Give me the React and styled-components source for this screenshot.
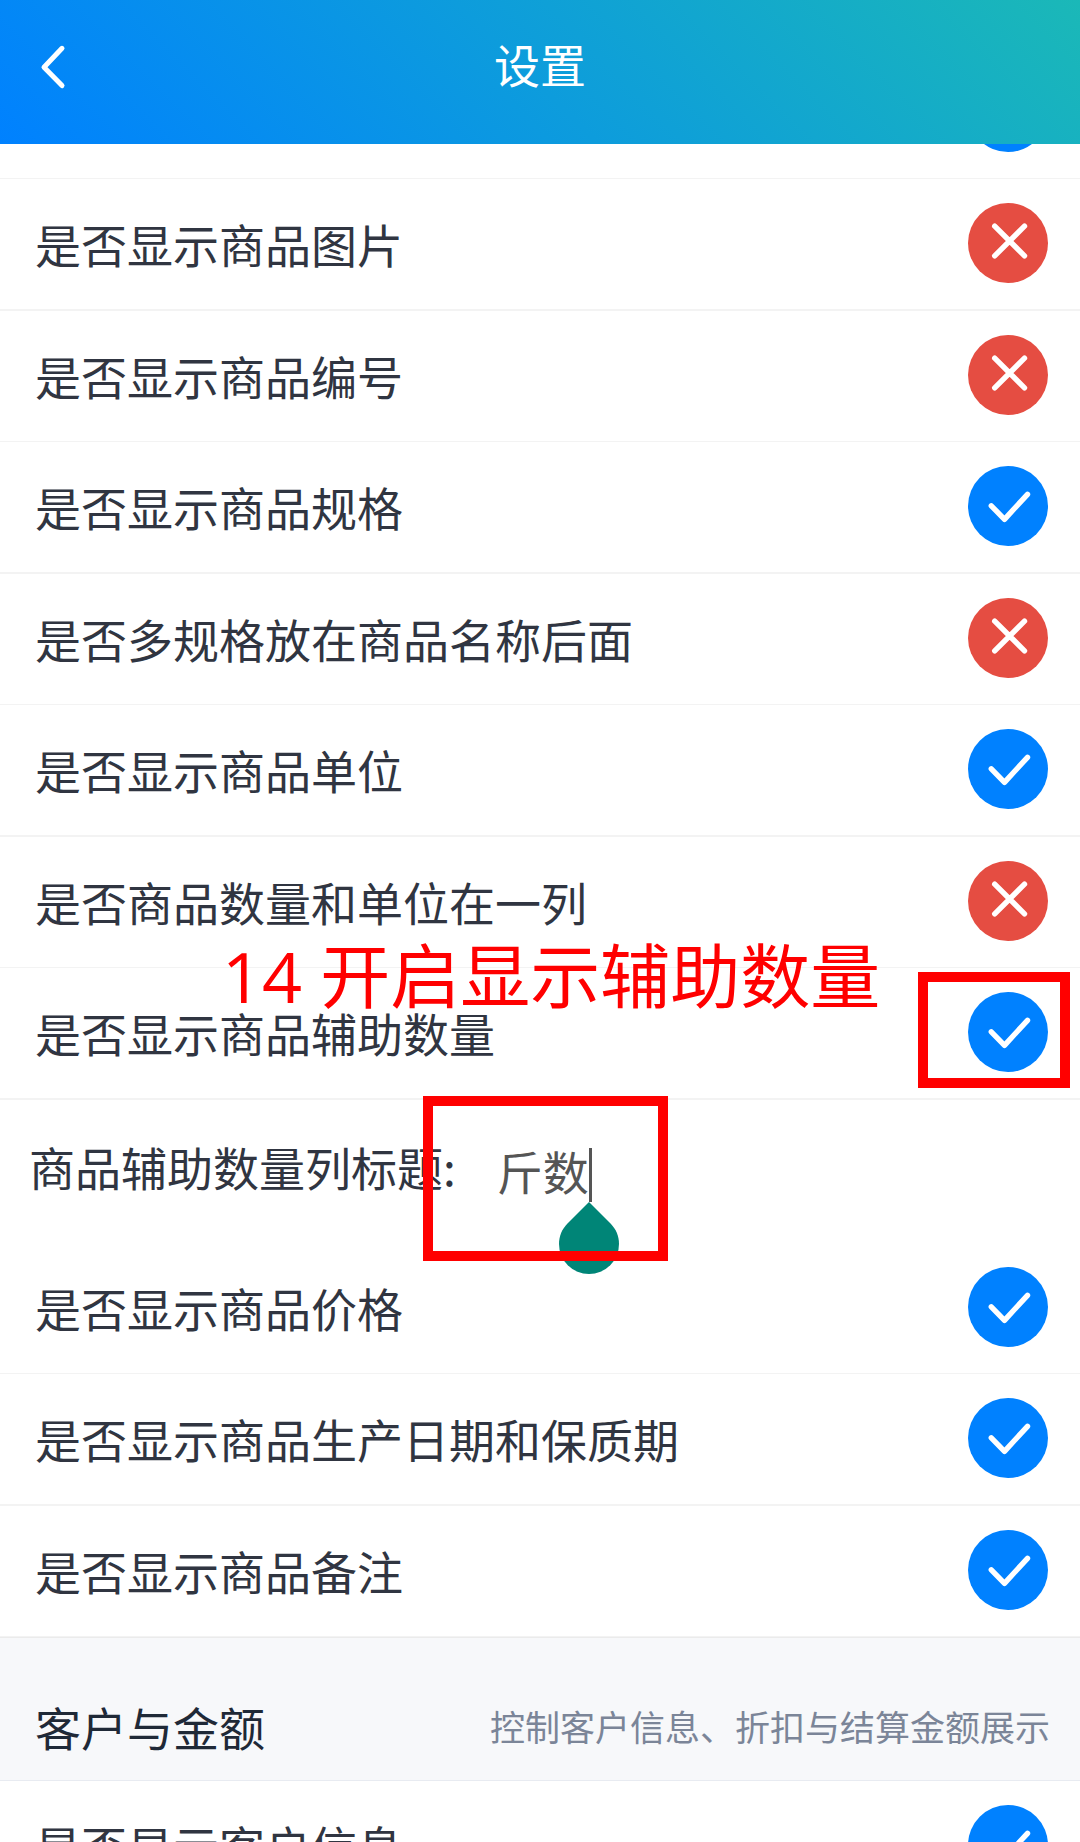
import React, { useState } from "react";
import styled, { createGlobalStyle } from "styled-components";

const COLORS = {
    BLUE: "#0081ff",
    RED: "#e54d42",
    MARK: "#ff0000",
    TEXT: "#303541",
    TITLE: "#1f2937",
    MUTED: "#7b8598",
    INPUT: "#555555",
    LINE: "#f3f3f3",
    HANDLE: "#008577",
};

const FONT_SIZE = {
    S: "35px",
    M: "46px",
    L: "70px",
};

const PRODUCT_OPTIONS = [
    { id: "name", hint: "商品名称", checked: true },
    { id: "image", title: "是否显示商品图片", checked: false },
    { id: "code", title: "是否显示商品编号", checked: false },
    { id: "spec", title: "是否显示商品规格", checked: true },
    { id: "specAfterName", title: "是否多规格放在商品名称后面", checked: false },
    { id: "unit", title: "是否显示商品单位", checked: true },
    { id: "unitInline", title: "是否商品数量和单位在一列", checked: false },
    {
        id: "auxCount",
        title: "是否显示商品辅助数量",
        checked: true,
        note: "14 开启显示辅助数量",
    },
];

const DETAIL_OPTIONS = [
    { id: "price", title: "是否显示商品价格", checked: true },
    { id: "dates", title: "是否显示商品生产日期和保质期", checked: true },
    { id: "remark", title: "是否显示商品备注", checked: true },
];

const CUSTOMER_OPTIONS = [
    { id: "customer", title: "是否显示客户信息", checked: true },
];

const GlobalStyle = createGlobalStyle`
    * {
        box-sizing: border-box;
    }

    body {
        background: #ffffff;
        color: ${COLORS.TEXT};
        font-family: "Noto Sans CJK SC", sans-serif;
        font-size: ${FONT_SIZE.M};
        margin: 0;
    }
`;

const Page = styled("div")`
    display: flex;
    flex-direction: column;
    height: 100vh;
    overflow: hidden;
`;

const Header = styled("header")`
    align-items: center;
    background: linear-gradient(45deg, ${COLORS.BLUE}, #1cbbb4 105%);
    color: #ffffff;
    display: grid;
    flex: none;
    grid-template-columns: 1fr auto 1fr;
    height: 144px;
    padding: 0 32px 10px;
`;

const BackButton = styled("button")`
    background: transparent;
    border: 0;
    color: inherit;
    cursor: pointer;
    height: 60px;
    justify-self: start;
    padding: 0;
    width: 40px;

    & svg {
        display: block;
    }
`;

const PageTitle = styled("h1")`
    font-size: ${FONT_SIZE.M};
    font-weight: 400;
    line-height: 60px;
    margin: 0;
    padding-bottom: 8px;
`;

const Scroller = styled("main")`
    flex: 1;
    min-height: 0;
    overflow-y: auto;
    scrollbar-width: none;
`;

/* the list is scrolled past its first entries */
const Settings = styled("div")`
    margin-top: -96px;
`;

const Group = styled("div")`
    display: flex;
    flex-direction: column;
`;

const Row = styled("div")`
    align-items: center;
    border-bottom: 1px solid ${COLORS.LINE};
    box-sizing: content-box;
    display: flex;
    height: 128px;
    justify-content: space-between;
    padding: 0 32px 2px 35px;
    position: relative;

    &:nth-child(even) {
        border-bottom-width: 2px;
    }
`;

const RowLabel = styled("label")`
    line-height: 60px;
`;

const Toggle = styled("span")`
    display: grid;
    margin-left: auto;

    & > * {
        grid-area: 1 / 1;
    }

    & svg {
        pointer-events: none;
    }
`;

const ToggleInput = styled("input")`
    appearance: none;
    background: ${COLORS.RED};
    border-radius: 50%;
    cursor: pointer;
    height: 80px;
    margin: 0;
    width: 80px;

    &:checked {
        background: ${COLORS.BLUE};
    }
`;

const Field = styled("div")`
    align-items: flex-start;
    display: flex;
    height: 143px;
    padding: 36px 32px 0 29px;
    position: relative;
`;

const FieldLabel = styled("label")`
    line-height: 60px;
    white-space: nowrap;
`;

const FieldBody = styled("div")`
    flex: 1;
    margin-left: 41px;
    padding-top: 4px;
    position: relative;
`;

const TextInput = styled("input")`
    background: transparent;
    border: 0;
    color: ${COLORS.INPUT};
    display: block;
    font-family: inherit;
    font-size: ${FONT_SIZE.M};
    height: 60px;
    line-height: 60px;
    outline: none;
    padding: 0;
    width: 100%;
`;

const Caret = styled("span")`
    background: ${COLORS.INPUT};
    height: 54px;
    left: 92px;
    position: absolute;
    top: 12px;
    width: 3px;
`;

const CaretHandle = styled("svg")`
    left: 62px;
    position: absolute;
    top: 66px;
`;

const Section = styled("div")`
    align-items: center;
    background: #f7f8fa;
    border-bottom: 1px solid #e8ebf1;
    border-top: 1px solid #ebebeb;
    display: flex;
    height: 144px;
    justify-content: space-between;
    padding: 34px 30px 0 35px;
`;

const SectionTitle = styled("h2")`
    color: ${COLORS.TITLE};
    font-size: ${FONT_SIZE.M};
    font-weight: 400;
    line-height: 60px;
    margin: 0;
`;

const SectionHint = styled("span")`
    color: ${COLORS.MUTED};
    font-size: ${FONT_SIZE.S};
    line-height: 60px;
`;

const MarkBox = styled("div")`
    border: 10px solid ${COLORS.MARK};
    pointer-events: none;
    position: absolute;
    z-index: 1;
`;

const ToggleMark = styled(MarkBox)`
    height: 116px;
    right: 10px;
    top: 4px;
    width: 152px;
`;

const FieldMark = styled(MarkBox)`
    height: 165px;
    left: 423px;
    top: -4px;
    width: 245px;
`;

const MarkText = styled("div")`
    color: ${COLORS.MARK};
    font-family: "Open Sans", "Noto Sans CJK SC", sans-serif;
    font-size: ${FONT_SIZE.L};
    left: 222px;
    line-height: 80px;
    pointer-events: none;
    position: absolute;
    top: -32px;
    white-space: nowrap;
    z-index: 1;
`;

const OptionRow = ({ option }) => {
    const [checked, setChecked] = useState(option.checked);

    return (
        <Row>
            {option.title && (
                <RowLabel htmlFor={option.id}>{option.title}</RowLabel>
            )}
            <Toggle>
                <ToggleInput
                    aria-label={option.hint}
                    checked={checked}
                    id={option.id}
                    onChange={(e) => setChecked(e.target.checked)}
                    type="checkbox"
                />
                <svg
                    width="80"
                    height="80"
                    viewBox="0 0 80 80"
                    fill="none"
                    stroke="#ffffff"
                    strokeWidth="5.4"
                    strokeLinecap="round"
                    strokeLinejoin="round"
                >
                    {checked ? (
                        <path d="M23.3 39.8 L36.5 53.3 L59.5 28.3" />
                    ) : (
                        <path d="M26.7 23.2 L56.5 52.8 M56.5 23.2 L26.7 52.8" />
                    )}
                </svg>
            </Toggle>
            {option.note && (
                <>
                    <MarkText>{option.note}</MarkText>
                    <ToggleMark />
                </>
            )}
        </Row>
    );
};

const App = () => {
    const [columnTitle, setColumnTitle] = useState("斤数");

    return (
        <Page>
            <GlobalStyle />
            <Header>
                <BackButton aria-label="返回">
                    <svg
                        width="40"
                        height="60"
                        viewBox="0 0 40 60"
                        fill="none"
                        stroke="currentColor"
                        strokeWidth="5"
                        strokeLinecap="round"
                        strokeLinejoin="round"
                    >
                        <path d="M30 11.3 L12 30.3 L30 48.6" />
                    </svg>
                </BackButton>
                <PageTitle>设置</PageTitle>
            </Header>
            <Scroller>
                <Settings>
                    <Group>
                        {PRODUCT_OPTIONS.map((o) => (
                            <OptionRow key={o.id} option={o} />
                        ))}
                    </Group>
                    <Field>
                        <FieldLabel htmlFor="columnTitle">
                            商品辅助数量列标题:
                        </FieldLabel>
                        <FieldBody>
                            <TextInput
                                id="columnTitle"
                                onChange={(e) => setColumnTitle(e.target.value)}
                                type="text"
                                value={columnTitle}
                            />
                            <Caret />
                            <CaretHandle
                                width="60"
                                height="72"
                                viewBox="0 0 60 72"
                                fill={COLORS.HANDLE}
                            >
                                <path d="M30 0 L51.5 21.5 C57 27 60 34 60 42 A30 30 0 0 1 0 42 C0 34 3 27 8.5 21.5 Z" />
                            </CaretHandle>
                        </FieldBody>
                        <FieldMark />
                    </Field>
                    <Group>
                        {DETAIL_OPTIONS.map((o) => (
                            <OptionRow key={o.id} option={o} />
                        ))}
                    </Group>
                    <Section>
                        <SectionTitle>客户与金额</SectionTitle>
                        <SectionHint>控制客户信息、折扣与结算金额展示</SectionHint>
                    </Section>
                    <Group>
                        {CUSTOMER_OPTIONS.map((o) => (
                            <OptionRow key={o.id} option={o} />
                        ))}
                    </Group>
                </Settings>
            </Scroller>
        </Page>
    );
};

export default App;
